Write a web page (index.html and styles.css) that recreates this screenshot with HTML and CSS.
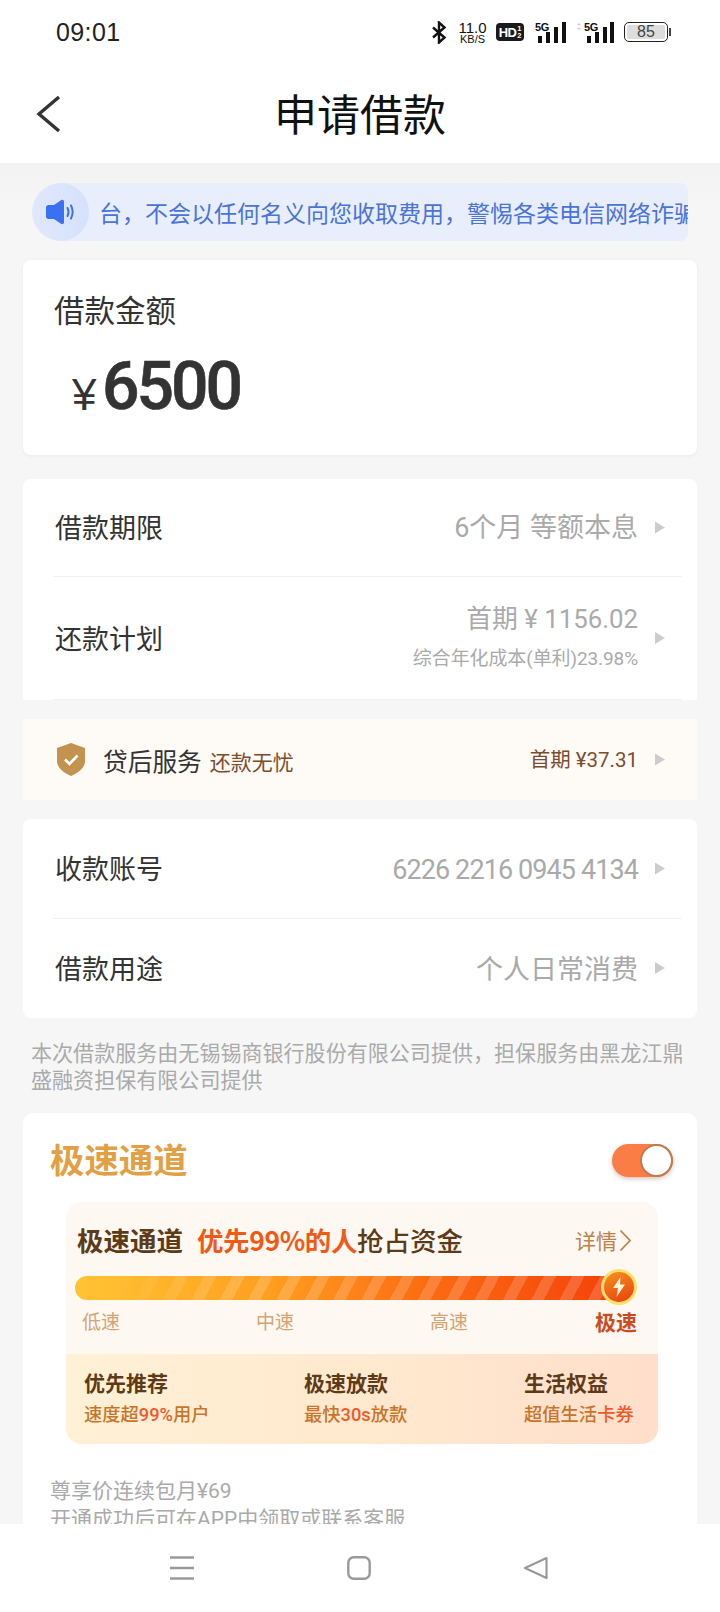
FILE: index.html
```html
<!DOCTYPE html>
<html lang="zh">
<head>
<meta charset="utf-8">
<title>申请借款</title>
<link rel="stylesheet" href="styles.css">
</head>
<body>
<div class="phone">
  <div class="top">
    <div class="status">
      <span class="time">09:01</span>
      <div class="status-icons">
        <svg class="ic-bt" width="16" height="23" viewBox="0 0 16 23"><path d="M2 6.500 13.500 16.500 8 21.500V1.500L13.500 6.500 2 16.500" fill="none" stroke="#111" stroke-width="2.400"/></svg>
        <div class="speed"><span class="speed-n">11.0</span><span class="speed-u">KB/S</span></div>
        <div class="hd"><span class="hd-t">HD</span><span class="hd-f"><span>1</span><span>2</span></span></div>
        <svg class="ic-sig" width="32" height="23" viewBox="0 0 32 23"><text x="0" y="10" class="sig-t">5G</text><rect x="3" y="15" width="4" height="7" fill="#111"/><rect x="11" y="11" width="4" height="11" fill="#111"/><rect x="19" y="6" width="4" height="16" fill="#111"/><rect x="27" y="1" width="4" height="21" fill="#111"/></svg>
        <svg class="ic-sig2" width="38" height="23" viewBox="0 0 38 23"><path d="M1 4 3 2 5 4ZM1 7 3 9 5 7Z" fill="#ccc"/><text x="8" y="10" class="sig-t">5G</text><rect x="11" y="15" width="4" height="7" fill="#111"/><rect x="19" y="11" width="4" height="11" fill="#111"/><rect x="27" y="6" width="4" height="16" fill="#111"/><rect x="34" y="1" width="4" height="21" fill="#111"/></svg>
        <div class="battery"><div class="batt-body"><span class="batt-fill">85</span></div><i class="batt-tip"></i></div>
      </div>
    </div>
    <div class="nav-head">
      <svg class="back" width="26" height="38" viewBox="0 0 26 38"><path d="M24 2 4 19 24 36" fill="none" stroke="#333" stroke-width="3.400"/></svg>
      <h1 class="title">申请借款</h1>
    </div>
  </div>

  <div class="main">
    <div class="notice">
      <div class="notice-ic">
        <svg width="32" height="26" viewBox="0 0 32 26"><path d="M1 8.500C1 7 2 6 3.500 6H9L16 1.200C17.500.3 19 1 19 3v20c0 2-1.500 2.700-3 1.800L9 20H3.500C2 20 1 19 1 17.500Z" fill="#3a70f2"/><path d="M22.500 9c1.300 2.500 1.300 5.500 0 8M26 6.500c2.100 4.100 2.100 8.900 0 13" fill="none" stroke="#3a70f2" stroke-width="2" stroke-linecap="round"/></svg>
      </div>
      <div class="notice-t">台，不会以任何名义向您收取费用，警惕各类电信网络诈骗</div>
    </div>

    <section class="card amount-card">
      <div class="amount-l">借款金额</div>
      <div class="amount"><span class="yen">¥</span><span class="amount-n">6500</span></div>
    </section>

    <section class="card plan-card">
      <div class="row row-a">
        <span class="label">借款期限</span>
        <span class="value">6个月 等额本息</span>
        <i class="tri"></i>
      </div>
      <div class="row row-b">
        <span class="label">还款计划</span>
        <div class="stack">
          <span class="value">首期 ¥ 1156.02</span>
          <span class="sub">综合年化成本(单利)23.98%</span>
        </div>
        <i class="tri"></i>
      </div>
    </section>

    <section class="service">
      <svg class="shield" width="28" height="33" viewBox="0 0 28 33"><path d="M14 0 28 5V18C28 25 21 30 14 33 7 30 0 25 0 18V5Z" fill="#c4924f"/><path d="M8 16.500 12.500 21 20.500 12.500" fill="none" stroke="#fff" stroke-width="2.600"/></svg>
      <span class="svc-l">贷后服务</span>
      <span class="svc-s">还款无忧</span>
      <span class="svc-v">首期 ¥37.31</span>
      <i class="tri"></i>
    </section>

    <section class="card acct-card">
      <div class="row row-c">
        <span class="label">收款账号</span>
        <span class="value num">6226 2216 0945 4134</span>
        <i class="tri"></i>
      </div>
      <div class="row row-d">
        <span class="label">借款用途</span>
        <span class="value">个人日常消费</span>
        <i class="tri"></i>
      </div>
    </section>

    <p class="disclaimer">本次借款服务由无锡锡商银行股份有限公司提供，担保服务由黑龙江鼎盛融资担保有限公司提供</p>

    <section class="card fast-card">
      <div class="fast-head">
        <h2 class="fast-title">极速通道</h2>
        <div class="toggle"><i class="knob"></i></div>
      </div>
      <div class="panel">
        <div class="panel-head">
          <span class="ph-a">极速通道</span>
          <span class="ph-b">优先99%的人</span>
          <span class="ph-c">抢占资金</span>
          <span class="ph-more">详情<svg width="13" height="23" viewBox="0 0 13 23"><path d="M1.500 1.500 11 11.500 1.500 21.500" fill="none" stroke="#bd824a" stroke-width="1.800"/></svg></span>
        </div>
        <div class="bar">
          <div class="bolt"><svg width="14" height="20" viewBox="0 0 14 20"><path d="M8.500 0 1 11H6L4.500 20 13 7.500H8Z" fill="#fff3d8"/></svg></div>
        </div>
        <div class="speeds">
          <span>低速</span><span>中速</span><span>高速</span><span class="on">极速</span>
        </div>
        <div class="benefits">
          <div class="bf"><strong>优先推荐</strong><span>速度超<em>99%</em>用户</span></div>
          <div class="bf"><strong>极速放款</strong><span>最快<em>30s</em>放款</span></div>
          <div class="bf"><strong>生活权益</strong><span>超值生活<em>卡券</em></span></div>
        </div>
      </div>
      <div class="terms">
        <p>尊享价连续包月¥69</p>
        <p>开通成功后可在APP中领取或联系客服</p>
      </div>
    </section>
  </div>

  <nav class="bottom">
    <svg width="26" height="24" viewBox="0 0 26 24"><path d="M1 1.500H25M1 12H25M1 22.500H25" stroke="#999" stroke-width="2.400" fill="none"/></svg>
    <svg width="24" height="24" viewBox="0 0 24 24"><rect x="1.300" y="1.300" width="21.400" height="21.400" rx="5.500" fill="none" stroke="#999" stroke-width="2.400"/></svg>
    <svg width="25" height="24" viewBox="0 0 25 24"><path d="M23.500 2 2 12 23.500 22Z" fill="none" stroke="#999" stroke-width="2.200" stroke-linejoin="round"/></svg>
  </nav>
</div>
</body>
</html>
```

FILE: styles.css
```css
* { box-sizing: border-box; margin: 0; padding: 0; }
html, body { width: 720px; height: 1612px; overflow: hidden; background: #f6f6f6; }
body { font-family: "Noto Sans CJK SC", "Liberation Sans", sans-serif; color: #333; }
.phone { width: 720px; height: 1612px; display: flex; flex-direction: column; overflow: hidden; }
.top { flex: none; background: #fff; height: 163px; }
.status { height: 64px; display: flex; align-items: center; justify-content: space-between; padding: 0 49px 0 56px; }
.time { font: 25px "Liberation Sans", sans-serif; color: #222; letter-spacing: .4px; }
.status-icons { display: flex; align-items: center; }
.ic-bt { margin-right: 11px; }
.speed { display: flex; flex-direction: column; align-items: center; width: 29px; margin-right: 9px; font-family: "Liberation Sans", sans-serif; color: #111; }
.speed-n { font-size: 15px; line-height: 13px; }
.speed-u { font-size: 11px; line-height: 10px; }
.hd { width: 28px; height: 18px; margin-right: 11px; background: #1a1a1a; border-radius: 4px; color: #fff; display: flex; align-items: center; justify-content: center; font-family: "Liberation Sans", sans-serif; font-weight: 700; }
.hd-t { font-size: 13px; letter-spacing: -.6px; }
.hd-f { display: flex; flex-direction: column; font-size: 7.500px; line-height: 7.500px; margin-left: 1px; }
.sig-t { font: 700 11px "Liberation Sans", sans-serif; fill: #111; letter-spacing: -.3px; }
.ic-sig { margin-right: 9px; }
.ic-sig2 { margin-right: 10px; }
.battery { display: flex; align-items: center; }
.batt-body { width: 44px; height: 20px; border: 1.500px solid #222; border-radius: 5px; padding: 2px; display: flex; }
.batt-fill { flex: 1; background: #ddd; border-radius: 2px; font: 16px/13px "Liberation Sans", sans-serif; color: #444; text-align: center; }
.batt-tip { width: 2px; height: 8px; background: #444; margin-left: 1px; }
.nav-head { height: 99px; position: relative; display: flex; align-items: center; justify-content: center; padding-bottom: 4px; }
.back { position: absolute; left: 35px; top: 31px; }
.title { font-size: 43px; font-weight: 400; line-height: 58px; color: #111; }

.main { flex: 1; min-height: 0; overflow: hidden; padding: 20px 23px 0; background: linear-gradient(#f2f2f2, #f6f6f6 40px); }
.notice { height: 58px; margin: 0 9px; background: #e8eefc; border-radius: 29px 8px 8px 29px; display: flex; align-items: center; overflow: hidden; }
.notice-ic { flex: none; width: 57px; height: 58px; border-radius: 50%; background: linear-gradient(90deg, #e0e8fb, #d6e1fb); display: flex; align-items: center; justify-content: center; }
.notice-t { margin-left: 10px; font-size: 23px; line-height: 30px; color: #4a74d8; white-space: nowrap; overflow: hidden; }

.card { background: #fff; border-radius: 8px; }
.amount-card { margin-top: 19px; height: 195px; padding: 31px 0 0 31px; box-shadow: 0 1px 4px rgba(0,0,0,.05); }
.amount-l { font-size: 30.500px; line-height: 36px; color: #333; }
.amount { margin: 25px 0 0 18px; display: flex; align-items: center; height: 70px; }
.yen { font: 400 44px/70px "Liberation Sans", sans-serif; margin-top: 15px; width: 30px; color: #333; }
.amount-n { font: 500 66px/70px "Roboto", sans-serif; letter-spacing: -3px; color: #333; -webkit-text-stroke: .6px #333; }

.plan-card { margin-top: 24px; height: 221px; border-radius: 8px 8px 0 0; }
.row { display: flex; align-items: center; padding: 0 32px 0 32px; }
.row-a { height: 97px; }
.row-b { height: 124px; }
.row-c { height: 99px; }
.row-d { height: 100px; }
.row-a, .row-b, .row-c { position: relative; }
.row-a::after, .row-b::after, .row-c::after { content: ""; position: absolute; left: 30px; right: 15px; bottom: 0; height: 1px; background: #f2f2f2; }
.row-a::after, .row-c::after { bottom: -1px; }
.label { font-size: 27px; line-height: 36px; color: #333; }
.row-a .label, .row-c .label { margin-bottom: 2px; }
.value { margin-left: auto; font-size: 27px; line-height: 36px; color: #aaa; font-family: "Roboto", "Noto Sans CJK SC", sans-serif; }
.value.num { letter-spacing: -.9px; margin-top: 2px; }
.row-d .value { margin-top: 3px; }
.stack { margin-left: auto; display: flex; flex-direction: column; align-items: flex-end; }
.stack .value { font-size: 25.800px; line-height: 36px; margin-top: -4px; }
.sub { font-size: 19px; line-height: 26px; color: #aaa; margin-top: 9px; font-family: "Roboto", "Noto Sans CJK SC", sans-serif; letter-spacing: -.1px; }
.tri { flex: none; margin-left: 17px; width: 10px; height: 12px; background: #ccc; clip-path: polygon(0 0, 100% 50%, 0 100%); }

.service { margin-top: 19px; height: 81px; background: #fefaf6; display: flex; align-items: center; padding: 0 32px 0 34px; }
.shield { flex: none; }
.svc-l { margin-left: 18px; font-size: 24.700px; line-height: 34px; color: #333; }
.svc-s { margin-left: 8px; font-size: 21px; line-height: 34px; color: #7a4d2e; margin-top: 2px; }
.svc-v { margin-left: auto; font-size: 20.500px; line-height: 30px; color: #7a4d2e; font-family: "Roboto", "Noto Sans CJK SC", sans-serif; }

.acct-card { margin-top: 19px; height: 199px; }
.disclaimer { margin: 21px 8px 20px; width: 662px; font-size: 21.050px; line-height: 27px; height: 54px; color: #aaa; }

.fast-card { border-radius: 10px 10px 0 0; padding-top: 26px; height: 500px; }
.fast-head { height: 42px; display: flex; align-items: center; justify-content: space-between; padding: 0 24px 0 27px; }
.fast-title { font-size: 34.400px; line-height: 40px; font-weight: 700; color: #e2a045; margin-bottom: 4px; }
.toggle { width: 61px; height: 33px; border-radius: 17px; background: #fb7d45; position: relative; box-shadow: 0 2px 4px rgba(150,90,60,.35); }
.knob { position: absolute; right: 0; top: 0; width: 33px; height: 33px; border-radius: 50%; background: #fff; border: 2px solid #c07a4e; }

.panel { margin: 21px 39px 0 43px; border-radius: 16px; background: #fdf8f1; height: 242px; display: flex; flex-direction: column; }
.panel-head { margin-top: 22px; height: 32px; padding: 0 26px 0 11px; display: flex; align-items: center; font-size: 26.500px; font-weight: 700; line-height: 32px; color: #5e3a17; white-space: nowrap; }
.ph-b { margin-left: 14px; color: #f05a17; font-weight: 700; letter-spacing: -.4px; }
.ph-c { font-weight: 500; }
.ph-more { margin-left: auto; display: flex; align-items: center; gap: 2px; font-size: 21px; font-weight: 400; color: #bd824a; }
.bar { margin: 20px 0 0 9px; width: 548px; height: 24px; border-radius: 12px; position: relative; background: linear-gradient(90deg, #ffc433, #ff9f20 35%, #fb6a12 65%, #f5400a); }
.bar::before { content: ""; position: absolute; inset: 0; border-radius: 12px; background: repeating-linear-gradient(118deg, rgba(255,255,255,0) 0 14px, rgba(255,255,255,.17) 14px 25px); -webkit-mask-image: linear-gradient(90deg, transparent 6%, #000 30%); mask-image: linear-gradient(90deg, transparent 6%, #000 30%); }
.bolt { position: absolute; right: -14px; top: -7px; width: 36px; height: 36px; border-radius: 50%; border: 3px solid #ffdf6e; background: linear-gradient(160deg, #f7901e, #e8400c); display: flex; align-items: center; justify-content: center; }
.speeds { margin: 8px 20px 0 16px; display: grid; grid-template-columns: 174px 174px 165px 1fr; font-size: 19px; line-height: 26px; color: #d4a474; }
.speeds .on { font-size: 21px; font-weight: 700; color: #cc4a1f; }
.benefits { margin-top: 20px; height: 90px; border-radius: 0 0 16px 16px; background: linear-gradient(90deg, #fff1d6, #ffe9cf 50%, #ffdfcb); display: grid; grid-template-columns: 220px 220px 1fr; padding: 15px 0 0 18px; }
.bf { display: flex; flex-direction: column; }
.bf strong { font-size: 21px; line-height: 26px; font-weight: 700; color: #5e3a17; }
.bf span { font-size: 18.300px; line-height: 26px; margin-top: 7px; font-weight: 500; color: #c8752a; font-family: "Roboto", "Noto Sans CJK SC", sans-serif; }
.bf em { font-style: normal; color: #ee5a2a; }
.terms { margin: 33px 0 0 27px; font-size: 21px; line-height: 28px; color: #aaa; font-family: "Roboto", "Noto Sans CJK SC", sans-serif; }

.bottom { flex: none; height: 88px; background: #fff; display: flex; justify-content: flex-start; padding: 32px 0 0 169px; gap: 152px; position: relative; }
.bottom svg { flex: none; }
```
